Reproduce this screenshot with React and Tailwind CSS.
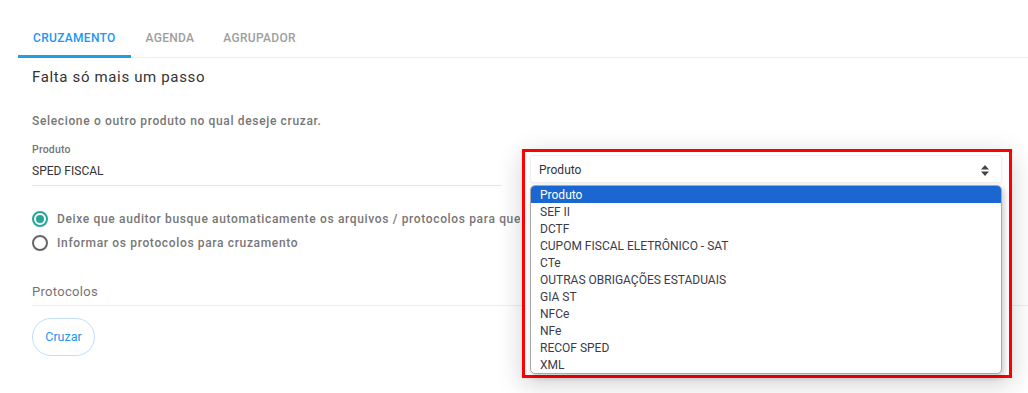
import React from "react";

const options = [
  "Produto",
  "SEF II",
  "DCTF",
  "CUPOM FISCAL ELETRÔNICO - SAT",
  "CTe",
  "OUTRAS OBRIGAÇÕES ESTADUAIS",
  "GIA ST",
  "NFCe",
  "NFe",
  "RECOF SPED",
  "XML",
];

function Radio({ checked }) {
  return (
    <span
      className={
        "flex h-[16px] w-[16px] shrink-0 items-center justify-center rounded-full border-2 " +
        (checked ? "border-[#26a69a]" : "border-[#666666]")
      }
    >
      {checked && <span className="h-[8px] w-[8px] rounded-full bg-[#26a69a]" />}
    </span>
  );
}

export default function App() {
  return (
    <div className="relative h-[393px] w-[1028px] overflow-hidden bg-white font-['Roboto',sans-serif]">
      {/* Tabs */}
      <div className="ml-[18px] mt-[18px] flex border-b border-[#eeeeee]">
        <div className="relative flex h-[39px] items-center px-[15px] text-[12px] font-medium tracking-[0.3px] text-[#2196f3]">
          CRUZAMENTO
          <span className="absolute bottom-[-1px] left-0 right-0 h-[3px] bg-[#1ea0e6]" />
        </div>
        <div className="flex h-[39px] items-center px-[15px] text-[12px] font-medium tracking-[0.3px] text-[#9e9e9e]">
          AGENDA
        </div>
        <div className="flex h-[39px] items-center px-[14px] text-[12px] font-medium tracking-[0.3px] text-[#9e9e9e]">
          AGRUPADOR
        </div>
      </div>

      <div className="pl-[32px]">
        <div className="mt-[9px] text-[15px] leading-[20px] tracking-[0.65px] text-[#333333]">
          Falta só mais um passo
        </div>
        <div className="mt-[26px] text-[12px] font-medium leading-[16px] tracking-[0.65px] text-[#777777]">
          Selecione o outro produto no qual deseje cruzar.
        </div>

        <div className="mt-[14px] w-[470px] border-b border-[#e6e6e6] pb-[7px]">
          <div className="text-[10.5px] font-medium leading-[14px] tracking-[0.2px] text-[#757575]">Produto</div>
          <div className="mt-[7px] text-[12px] leading-[14px] text-[#333333]">SPED FISCAL</div>
        </div>

        <div className="mt-[25px] flex w-[488px] flex-col gap-[8px] overflow-hidden">
          <div className="flex h-[16px] items-center gap-[9px] whitespace-nowrap text-[12px] font-medium tracking-[0.65px] text-[#777777]">
            <Radio checked />
            Deixe que auditor busque automaticamente os arquivos / protocolos para que o cruzamento seja realizado
          </div>
          <div className="flex h-[16px] items-center gap-[9px] whitespace-nowrap text-[12px] font-medium tracking-[0.65px] text-[#777777]">
            <Radio />
            Informar os protocolos para cruzamento
          </div>
        </div>

        <div className="mt-[32px] border-b border-[#eeeeee] pb-[4px] text-[13px] leading-[18px] tracking-[0.3px] text-[#757575]">
          Protocolos
        </div>

        <button className="mt-[12px] h-[38px] w-[63px] rounded-full border border-[#bfdffb] text-[12.5px] text-[#2196f3]">
          Cruzar
        </button>
      </div>

      {/* Popup overlay */}
      <div className="absolute left-[522px] top-[149px] h-[229px] w-[490px] border-[3px] border-[#ff0000] bg-white pb-[2px] pl-[5px] pr-[7px] pt-[3px] shadow-[0_6px_24px_rgba(0,0,0,0.18)]">
        <div className="flex h-[28px] items-center justify-between rounded-[3px] border border-[#f0f0f2] bg-white pl-[8px] pr-[12px] pt-[2px] text-[12px] text-[#333333] shadow-[0_1px_3px_rgba(0,0,0,0.06)]">
          <span>Produto</span>
          <svg width="8" height="11" viewBox="0 0 8 11" className="text-[#444]">
            <path d="M4 0 L8 4.5 H0 Z" fill="currentColor" />
            <path d="M0 6.5 H8 L4 11 Z" fill="currentColor" />
          </svg>
        </div>
        <div className="mt-[2px] overflow-hidden rounded-[5px] border border-[#a8a8a8] bg-white shadow-[2px_3px_6px_rgba(0,0,0,0.22)]">
          {options.map((o, i) => (
            <div
              key={o}
              className={
                "flex h-[17px] items-center pl-[9px] text-[12px] " +
                (i === 0 ? "bg-[#1a67d2] text-white" : "text-[#3b3b4a]")
              }
            >
              {o}
            </div>
          ))}
        </div>
      </div>
    </div>
  );
}
